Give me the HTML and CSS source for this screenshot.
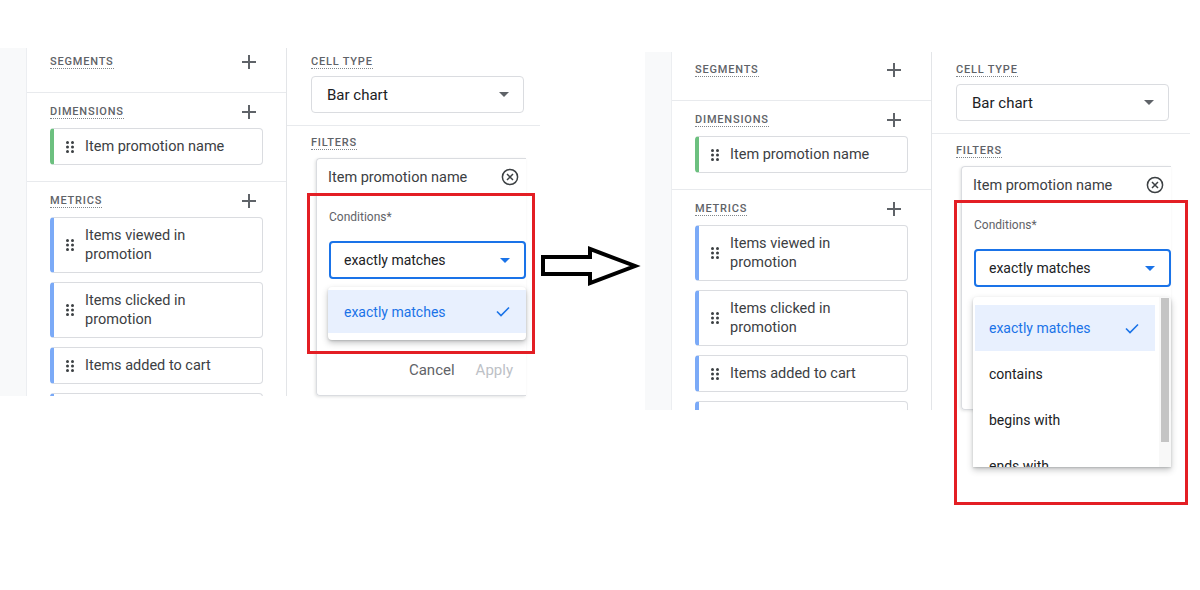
FILE: index.html
```html
<!DOCTYPE html>
<html lang="en">

<head>
    <meta charset="UTF-8">
    <meta name="viewport" content="width=device-width, initial-scale=1.0">
    <title>Filter conditions</title>
    <link rel="stylesheet" href="styles.css">
</head>

<body>
    <div class="stage">

        <!-- before: single option in the conditions menu -->
        <div class="panel panel-before">
            <div class="rail"></div>
            <div class="variables">
                <div class="section section-first">
                    <div class="section-head">
                        <span class="section-title">Segments</span>
                        <svg class="add" viewBox="0 0 14 14"><path d="M7 0v14M0 7h14" /></svg>
                    </div>
                </div>
                <div class="section">
                    <div class="section-head">
                        <span class="section-title">Dimensions</span>
                        <svg class="add" viewBox="0 0 14 14"><path d="M7 0v14M0 7h14" /></svg>
                    </div>
                    <div class="chip chip-dimension">
                        <svg class="grip" viewBox="0 0 8 12"><circle cx="1.5" cy="1.5" r="1.5" /><circle cx="6.5" cy="1.5" r="1.5" /><circle cx="1.5" cy="6" r="1.5" /><circle cx="6.5" cy="6" r="1.5" /><circle cx="1.5" cy="10.5" r="1.5" /><circle cx="6.5" cy="10.5" r="1.5" /></svg>
                        <span>Item promotion name</span>
                    </div>
                </div>
                <div class="section section-last">
                    <div class="section-head">
                        <span class="section-title">Metrics</span>
                        <svg class="add" viewBox="0 0 14 14"><path d="M7 0v14M0 7h14" /></svg>
                    </div>
                    <div class="chip">
                        <svg class="grip" viewBox="0 0 8 12"><circle cx="1.5" cy="1.5" r="1.5" /><circle cx="6.5" cy="1.5" r="1.5" /><circle cx="1.5" cy="6" r="1.5" /><circle cx="6.5" cy="6" r="1.5" /><circle cx="1.5" cy="10.5" r="1.5" /><circle cx="6.5" cy="10.5" r="1.5" /></svg>
                        <span>Items viewed in promotion</span>
                    </div>
                    <div class="chip">
                        <svg class="grip" viewBox="0 0 8 12"><circle cx="1.5" cy="1.5" r="1.5" /><circle cx="6.5" cy="1.5" r="1.5" /><circle cx="1.5" cy="6" r="1.5" /><circle cx="6.5" cy="6" r="1.5" /><circle cx="1.5" cy="10.5" r="1.5" /><circle cx="6.5" cy="10.5" r="1.5" /></svg>
                        <span>Items clicked in promotion</span>
                    </div>
                    <div class="chip">
                        <svg class="grip" viewBox="0 0 8 12"><circle cx="1.5" cy="1.5" r="1.5" /><circle cx="6.5" cy="1.5" r="1.5" /><circle cx="1.5" cy="6" r="1.5" /><circle cx="6.5" cy="6" r="1.5" /><circle cx="1.5" cy="10.5" r="1.5" /><circle cx="6.5" cy="10.5" r="1.5" /></svg>
                        <span>Items added to cart</span>
                    </div>
                    <div class="chip">
                        <svg class="grip" viewBox="0 0 8 12"><circle cx="1.5" cy="1.5" r="1.5" /><circle cx="6.5" cy="1.5" r="1.5" /><circle cx="1.5" cy="6" r="1.5" /><circle cx="6.5" cy="6" r="1.5" /><circle cx="1.5" cy="10.5" r="1.5" /><circle cx="6.5" cy="10.5" r="1.5" /></svg>
                        <span>Items checked out</span>
                    </div>
                </div>
            </div>
            <div class="settings">
                <div class="section section-first cell-type">
                    <div class="section-head">
                        <span class="section-title">Cell type</span>
                    </div>
                    <div class="select">
                        <span>Bar chart</span>
                        <svg class="caret" viewBox="0 0 10 5"><path d="M0 0h10L5 5z" /></svg>
                    </div>
                </div>
                <div class="filters">
                    <div class="section-head">
                        <span class="section-title">Filters</span>
                    </div>
                    <div class="filter-card">
                        <div class="filter-name">
                            <span>Item promotion name</span>
                            <svg class="remove" viewBox="0 0 18 18"><circle cx="9" cy="9" r="7.6" /><path d="M6 6l6 6M12 6l-6 6" /></svg>
                        </div>
                        <div class="filter-body">
                            <div class="field-label">Conditions*</div>
                            <div class="select select-open">
                                <span>exactly matches</span>
                                <svg class="caret" viewBox="0 0 10 5"><path d="M0 0h10L5 5z" /></svg>
                            </div>
                            <div class="actions">
                                <span class="btn">Cancel</span>
                                <span class="btn btn-disabled">Apply</span>
                            </div>
                        </div>
                        <div class="menu">
                            <div class="menu-item menu-item-selected">
                                <span>exactly matches</span>
                                <svg class="check" viewBox="0 0 14 11"><path d="M1 5.5l4 4 8-8" /></svg>
                            </div>
                        </div>
                        <div class="highlight"></div>
                    </div>
                </div>
            </div>
        </div>

        <div class="arrow">
            <svg viewBox="0 0 105 45" width="105" height="45"><path d="M3 14h47V6l45 17-45 17v-9H3z" /></svg>
        </div>

        <!-- after: full list of conditions -->
        <div class="panel panel-after">
            <div class="rail"></div>
            <div class="variables">
                <div class="section section-first">
                    <div class="section-head">
                        <span class="section-title">Segments</span>
                        <svg class="add" viewBox="0 0 14 14"><path d="M7 0v14M0 7h14" /></svg>
                    </div>
                </div>
                <div class="section">
                    <div class="section-head">
                        <span class="section-title">Dimensions</span>
                        <svg class="add" viewBox="0 0 14 14"><path d="M7 0v14M0 7h14" /></svg>
                    </div>
                    <div class="chip chip-dimension">
                        <svg class="grip" viewBox="0 0 8 12"><circle cx="1.5" cy="1.5" r="1.5" /><circle cx="6.5" cy="1.5" r="1.5" /><circle cx="1.5" cy="6" r="1.5" /><circle cx="6.5" cy="6" r="1.5" /><circle cx="1.5" cy="10.5" r="1.5" /><circle cx="6.5" cy="10.5" r="1.5" /></svg>
                        <span>Item promotion name</span>
                    </div>
                </div>
                <div class="section section-last">
                    <div class="section-head">
                        <span class="section-title">Metrics</span>
                        <svg class="add" viewBox="0 0 14 14"><path d="M7 0v14M0 7h14" /></svg>
                    </div>
                    <div class="chip">
                        <svg class="grip" viewBox="0 0 8 12"><circle cx="1.5" cy="1.5" r="1.5" /><circle cx="6.5" cy="1.5" r="1.5" /><circle cx="1.5" cy="6" r="1.5" /><circle cx="6.5" cy="6" r="1.5" /><circle cx="1.5" cy="10.5" r="1.5" /><circle cx="6.5" cy="10.5" r="1.5" /></svg>
                        <span>Items viewed in promotion</span>
                    </div>
                    <div class="chip">
                        <svg class="grip" viewBox="0 0 8 12"><circle cx="1.5" cy="1.5" r="1.5" /><circle cx="6.5" cy="1.5" r="1.5" /><circle cx="1.5" cy="6" r="1.5" /><circle cx="6.5" cy="6" r="1.5" /><circle cx="1.5" cy="10.5" r="1.5" /><circle cx="6.5" cy="10.5" r="1.5" /></svg>
                        <span>Items clicked in promotion</span>
                    </div>
                    <div class="chip">
                        <svg class="grip" viewBox="0 0 8 12"><circle cx="1.5" cy="1.5" r="1.5" /><circle cx="6.5" cy="1.5" r="1.5" /><circle cx="1.5" cy="6" r="1.5" /><circle cx="6.5" cy="6" r="1.5" /><circle cx="1.5" cy="10.5" r="1.5" /><circle cx="6.5" cy="10.5" r="1.5" /></svg>
                        <span>Items added to cart</span>
                    </div>
                    <div class="chip">
                        <svg class="grip" viewBox="0 0 8 12"><circle cx="1.5" cy="1.5" r="1.5" /><circle cx="6.5" cy="1.5" r="1.5" /><circle cx="1.5" cy="6" r="1.5" /><circle cx="6.5" cy="6" r="1.5" /><circle cx="1.5" cy="10.5" r="1.5" /><circle cx="6.5" cy="10.5" r="1.5" /></svg>
                        <span>Items checked out</span>
                    </div>
                </div>
            </div>
            <div class="settings">
                <div class="section section-first cell-type">
                    <div class="section-head">
                        <span class="section-title">Cell type</span>
                    </div>
                    <div class="select">
                        <span>Bar chart</span>
                        <svg class="caret" viewBox="0 0 10 5"><path d="M0 0h10L5 5z" /></svg>
                    </div>
                </div>
                <div class="filters">
                    <div class="section-head">
                        <span class="section-title">Filters</span>
                    </div>
                    <div class="filter-card">
                        <div class="filter-name">
                            <span>Item promotion name</span>
                            <svg class="remove" viewBox="0 0 18 18"><circle cx="9" cy="9" r="7.6" /><path d="M6 6l6 6M12 6l-6 6" /></svg>
                        </div>
                        <div class="filter-body">
                            <div class="field-label">Conditions*</div>
                            <div class="select select-open">
                                <span>exactly matches</span>
                                <svg class="caret" viewBox="0 0 10 5"><path d="M0 0h10L5 5z" /></svg>
                            </div>
                        </div>
                        <div class="menu menu-scroll">
                            <div class="menu-list">
                                <div class="menu-item menu-item-selected">
                                    <span>exactly matches</span>
                                    <svg class="check" viewBox="0 0 14 11"><path d="M1 5.5l4 4 8-8" /></svg>
                                </div>
                                <div class="menu-item">contains</div>
                                <div class="menu-item">begins with</div>
                                <div class="menu-item">ends with</div>
                            </div>
                            <div class="scrollbar"><div class="thumb"></div></div>
                        </div>
                        <div class="highlight"></div>
                    </div>
                </div>
            </div>
        </div>

    </div>
</body>

</html>
```

FILE: styles.css
```css
* {
    box-sizing: border-box;
}

body {
    margin: 0;
    background-color: #fff;
    font-family: Roboto, "Liberation Sans", Arial, sans-serif;
    color: #202124;
}

.stage {
    display: flex;
    align-items: flex-start;
    width: 1200px;
    height: 590px;
}

/* Panels */
.panel {
    display: flex;
    width: 540px;
    height: 348px;
    margin-top: 48px;
    background-color: #fff;
}

.panel-after {
    width: 545px;
    height: 358px;
    margin-top: 52px;
}

.rail {
    width: 27px;
    background-color: #f8f9fa;
    border-right: 1px solid #eceef1;
}

.variables {
    width: 260px;
    border-right: 1px solid #e3e5e8;
    overflow: hidden;
}

.settings {
    flex: 1;
    display: flex;
    flex-direction: column;
}

.section {
    padding: 11px 23px 16px;
    border-bottom: 1px solid #e8eaed;
}

.section-first {
    padding-top: 6px;
    padding-bottom: 14px;
}

.panel-after .section-first {
    padding-top: 10px;
}

.section-last {
    border-bottom: none;
}

.section-head {
    display: flex;
    justify-content: space-between;
    align-items: center;
    height: 16px;
    margin-bottom: 8px;
}

.section-title {
    font-size: 11px;
    font-weight: 500;
    line-height: 13px;
    letter-spacing: 0.8px;
    text-transform: uppercase;
    color: #5f6368;
    border-bottom: 1px dotted #80868b;
}

.add {
    width: 14px;
    height: 14px;
    margin-right: 7px;
    stroke: #5f6368;
    stroke-width: 2;
}

/* Variable chips */
.chip {
    display: flex;
    align-items: center;
    gap: 11px;
    padding: 8px 20px 8px 12px;
    margin-bottom: 9px;
    border: 1px solid #dadce0;
    border-left: 4px solid #7baaf7;
    border-radius: 4px;
    font-size: 14.5px;
    line-height: 19px;
    color: #3c4043;
}

.chip-dimension {
    border-left-color: #6cc07f;
}

.chip-dimension:last-child {
    margin-bottom: 0;
}

.grip {
    flex: none;
    width: 8px;
    height: 12px;
    fill: #3c4043;
}

/* Settings column */
.cell-type {
    padding: 6px 0 12px 24px;
}

.panel-after .cell-type {
    padding-top: 10px;
}

.cell-type .section-head {
    margin-bottom: 6px;
}

.select {
    display: flex;
    justify-content: space-between;
    align-items: center;
    width: 213px;
    height: 37px;
    padding: 0 14px 0 15px;
    border: 1px solid #dadce0;
    border-radius: 4px;
    font-size: 15px;
    color: #202124;
}

.caret {
    width: 10px;
    height: 5px;
    fill: #5f6368;
}

.filters {
    flex: 1;
    display: flex;
    flex-direction: column;
    padding: 9px 0 0 24px;
}

.filters .section-head {
    margin-bottom: 7px;
}

.filter-card {
    position: relative;
    flex: 1;
    width: 210px;
    margin-left: 5px;
    border: 1px solid #dadce0;
    border-right: none;
    border-radius: 4px 0 0 4px;
    box-shadow: -1px 1px 3px rgba(60, 64, 67, 0.15);
}

.filter-name {
    display: flex;
    justify-content: space-between;
    align-items: center;
    height: 36px;
    padding: 0 7px 0 11px;
    font-size: 14.5px;
    color: #3c4043;
}

.remove {
    width: 18px;
    height: 18px;
    fill: none;
    stroke: #3c4043;
    stroke-width: 1.5;
}

.filter-body {
    padding-left: 12px;
}

.field-label {
    margin-top: 14px;
    font-size: 12px;
    line-height: 16px;
    color: #5f6368;
}

.select-open {
    width: 100%;
    height: 38px;
    margin-top: 16px;
    padding: 0 14px 0 13px;
    border: 2px solid #1a73e8;
    font-size: 14px;
}

.select-open .caret {
    fill: #1a73e8;
}

.actions {
    display: flex;
    justify-content: flex-end;
    align-items: center;
    gap: 21px;
    height: 36px;
    margin-top: 73px;
    padding-right: 13px;
    font-size: 15px;
}

.btn {
    color: #5f6368;
}

.btn-disabled {
    color: #bdc1c6;
}

/* Conditions menu */
.menu {
    position: absolute;
    left: 11px;
    top: 128px;
    width: 198px;
    padding: 3px 0 7px;
    background-color: #fff;
    border-radius: 4px;
    box-shadow: 0 3px 6px rgba(60, 64, 67, 0.3), 0 1px 2px rgba(60, 64, 67, 0.2);
}

.menu-item {
    display: flex;
    justify-content: space-between;
    align-items: center;
    height: 43px;
    padding: 0 16px;
    font-size: 14px;
    color: #202124;
}

.menu-item-selected {
    background-color: #e8f0fe;
    color: #1a73e8;
}

.check {
    width: 14px;
    height: 11px;
    fill: none;
    stroke: #1a73e8;
    stroke-width: 1.6;
}

.menu-scroll {
    display: flex;
    top: 130px;
    height: 170px;
    padding: 0;
    overflow: hidden;
    border-radius: 4px 4px 0 0;
}

.menu-list {
    flex: 1;
    padding: 8px 4px 0 2px;
}

.menu-scroll .menu-item {
    height: 46px;
    padding: 0 16px 0 14px;
}

.scrollbar {
    width: 12px;
    padding: 1px 2px 0;
    background-color: #f8f8f8;
}

.thumb {
    height: 144px;
    background-color: #c4c4c4;
}

/* Red annotation box */
.highlight {
    position: absolute;
    left: -10px;
    top: 34px;
    width: 228px;
    height: 161px;
    border: 3px solid #e31e24;
    pointer-events: none;
}

.panel-after .highlight {
    left: -8px;
    top: 33px;
    width: 234px;
    height: 305px;
}

/* Arrow between the two states */
.arrow {
    width: 105px;
    margin-top: 243px;
}

.arrow svg {
    display: block;
    fill: #fff;
    stroke: #000;
    stroke-width: 4;
}
```
